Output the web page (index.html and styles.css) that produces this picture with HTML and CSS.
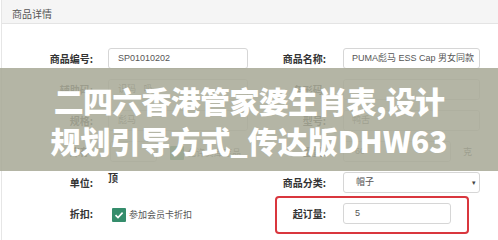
FILE: index.html
```html
<!DOCTYPE html>
<html lang="zh-CN">
<head>
<meta charset="utf-8">
<link rel="stylesheet" href="styles.css">
</head>
<body>
<div class="page">
  <div class="panel">
    <div class="panel-head">商品详情</div>
    <div class="form">
      <div class="label">商品编号:</div>
      <div class="field">SP01010202</div>
      <div class="label label-r">商品名称:</div>
      <div class="field field-r">PUMA彪马 ESS Cap 男女同款</div>

      <div class="label">辅助码:</div>
      <div class="field">识码 &nbsp; 吸</div>
      <div class="label label-r">条形码:</div>
      <div class="field field-r"></div>

      <div class="label">规格:</div>
      <div class="field">彪马</div>
      <div class="label label-r">型号:</div>
      <div class="field field-r">鸭舌</div>

      <div class="label">库存:</div>
      <div class="cell">
        <div class="field field-s"></div>
        <span class="check"><svg viewBox="0 0 14 14" width="14" height="14"><path d="M3.5 7.2 L6 9.6 L10.6 4.6" fill="none" stroke="#fff" stroke-width="1.6"/></svg></span>
        <span class="check-text">允许负库存品</span>
      </div>
      <div class="label label-r">重量:</div>
      <div class="cell">
        <div class="field field-m">60</div>
        <span class="unit">克</span>
      </div>

      <div class="label">单位:</div>
      <div class="value">顶</div>
      <div class="label label-r">商品分类:</div>
      <div class="field field-r field-sel"><span>帽子</span><span class="caret">▾</span></div>

      <div class="label">折扣:</div>
      <div class="cell">
        <span class="check"><svg viewBox="0 0 14 14" width="14" height="14"><path d="M3.5 7.2 L6 9.6 L10.6 4.6" fill="none" stroke="#fff" stroke-width="1.6"/></svg></span>
        <span class="check-text">参加会员卡折扣</span>
      </div>
      <div class="highlight">
        <div class="label label-r hl-label">起订量:</div>
        <div class="field field-m field-pad">5</div>
      </div>
    </div>
  </div>
  <div class="banner">
    <div class="banner-line banner-line-1">二四六香港管家婆生肖表,设计</div>
    <div class="banner-line">规划引导方式_传达版DHW63</div>
  </div>
</div>
</body>
</html>
```
FILE: styles.css
```css
html, body {
  margin: 0;
  padding: 0;
  background: #fff;
}
.page {
  position: relative;
  width: 498px;
  height: 240px;
  overflow: hidden;
  font-family: "Liberation Sans", "Noto Sans CJK SC", sans-serif;
}
.panel {
  margin-left: 1px;
  border-left: 1px solid #e6e6e6;
  height: 240px;
}
.panel-head {
  height: 23px;
  line-height: 27px;
  background: #f5f5f5;
  border-bottom: 1px solid #e4e4e4;
  padding-left: 10px;
  font-size: 10px;
  color: #555;
  font-family: "Noto Sans CJK SC", sans-serif;
}
.form {
  padding-top: 24px;
  display: grid;
  grid-template-columns: 106px 140px 95px 137px;
  grid-auto-rows: 21px;
  row-gap: 10px;
}
.label {
  text-align: right;
  padding-right: 15px;
  font-size: 10px;
  font-weight: bold;
  color: #333;
  line-height: 21px;
  font-family: "Noto Sans CJK SC", sans-serif;
}
.label-r {
  padding-right: 17px;
}
.field {
  box-sizing: border-box;
  height: 21px;
  border: 1px solid #d6d6d6;
  border-radius: 3px;
  padding-left: 9px;
  font-size: 9px;
  line-height: 19px;
  color: #555;
  white-space: nowrap;
  overflow: hidden;
}
.field-r {
  padding-left: 8px;
}
.field-s {
  width: 47px;
  margin-left: 2px;
}
.field-m {
  width: 108px;
  padding-left: 11px;
}
.field-sel {
  display: flex;
  justify-content: space-between;
  padding-left: 12px;
  padding-right: 3px;
}
.caret {
  font-size: 7px;
  color: #444;
}
.cell {
  display: flex;
  align-items: center;
}
.check {
  width: 14px;
  height: 14px;
  background: #358d6c;
  border-radius: 1px;
  display: inline-flex;
  margin-left: 4px;
  margin-top: 2px;
}
.field-s + .check {
  margin-left: 13px;
}
.check-text {
  margin-left: 3px;
  font-size: 9px;
  color: #555;
  margin-top: 1px;
}
.unit {
  margin-left: 12px;
  font-size: 9px;
  color: #444;
}
.value {
  font-size: 10px;
  font-weight: bold;
  color: #333;
  line-height: 11px;
  font-family: "Noto Sans CJK SC", sans-serif;
}
.highlight {
  grid-column: 3 / 5;
  display: grid;
  grid-template-columns: 95px 137px;
  position: relative;
}
.highlight::after {
  content: "";
  position: absolute;
  left: 27px;
  right: 11px;
  top: -7px;
  bottom: -10px;
  border: 2px solid #d9363e;
  border-radius: 4px;
}
.banner {
  position: absolute;
  left: 0;
  right: 0;
  top: 68px;
  height: 103px;
  background: rgba(170, 171, 153, 0.88);
  display: flex;
  flex-direction: column;
  justify-content: center;
  align-items: center;
}
.banner-line {
  font-family: "Noto Sans CJK SC", sans-serif;
  font-weight: 900;
  font-size: 30px;
  line-height: 40px;
  color: #fff;
  white-space: nowrap;
}
.banner-line-1 {
  letter-spacing: -0.7px;
}
```
